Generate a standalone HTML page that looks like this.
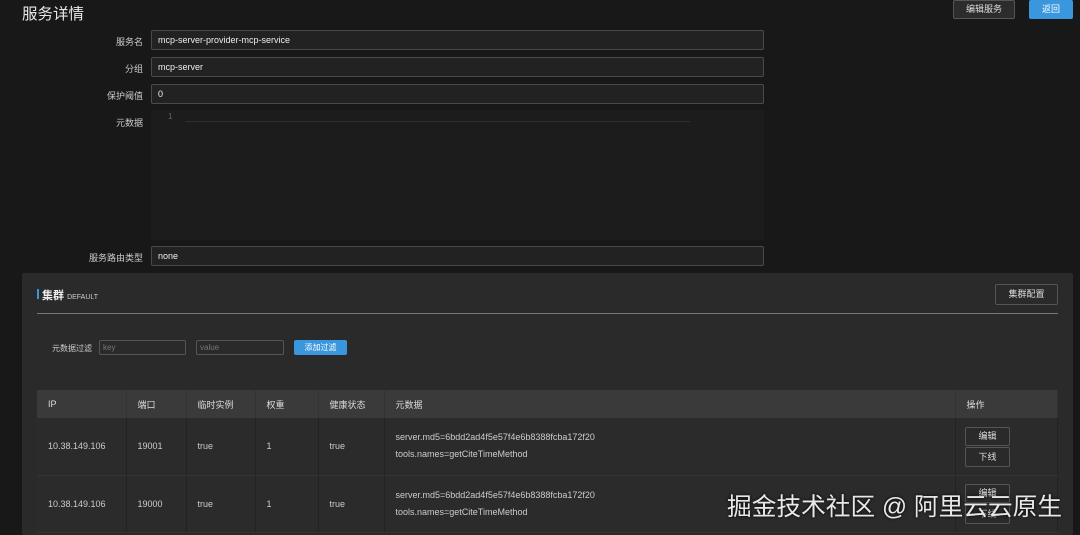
<!DOCTYPE html>
<html><head><meta charset="utf-8"><style>
*{box-sizing:border-box;margin:0;padding:0}
body{width:1080px;height:535px;overflow:hidden;background:#181818;font-family:"Liberation Sans","Noto Sans CJK SC",sans-serif;color:#ddd;position:relative;font-size:9px}
.a{position:absolute}
.lbl{position:absolute;right:937px;font-size:9px;color:#ccc;text-align:right}
.inp{position:absolute;left:151px;width:613px;height:20px;border:1px solid #4a4a4a;background:#222;border-radius:2px;padding-left:6px;line-height:18px;font-size:9px;color:#eee}
.btn{position:absolute;border:1px solid #555;border-radius:2px;text-align:center;font-size:9px;color:#ddd;background:#2a2a2a}
.blue{background:#3a96dd;border-color:#3a96dd;color:#fff}
table{position:absolute;left:37px;top:390px;width:1021px;border-collapse:collapse;font-size:9px;color:#ccc}
th{background:#3a3a3a;height:28px;text-align:left;padding-left:11px;font-weight:normal;color:#ddd;border-right:1px solid #333}
td{height:57px;padding-left:11px;border-right:1px solid #222;border-bottom:1px solid #333;background:#2b2b2b}
</style></head><body>
<div class="a" style="left:22px;top:2px;font-size:15.5px;color:#e8e8e8">服务详情</div>
<div class="btn" style="left:953px;top:0;width:62px;height:19px;line-height:17px;background:#2c2c2c">编辑服务</div>
<div class="btn blue" style="left:1029px;top:0;width:44px;height:19px;line-height:17px">返回</div>
<div class="lbl" style="top:35px">服务名</div><div class="inp" style="top:30px">mcp-server-provider-mcp-service</div>
<div class="lbl" style="top:62px">分组</div><div class="inp" style="top:57px">mcp-server</div>
<div class="lbl" style="top:89px">保护阈值</div><div class="inp" style="top:84px">0</div>
<div class="lbl" style="top:116px">元数据</div>
<div class="a" style="left:151px;top:110px;width:613px;height:130px;background:#1c1c1c"></div>
<div class="a" style="left:168px;top:112px;font-size:8px;color:#666">1</div>
<div class="a" style="left:185px;top:121px;width:505px;height:1px;background:#2e2e2e"></div>
<div class="lbl" style="top:251px">服务路由类型</div><div class="inp" style="top:246px">none</div>
<div class="a" style="left:22px;top:273px;width:1051px;height:262px;background:#2a2a2a;border-radius:2px"></div>
<div class="a" style="left:37px;top:289px;width:2px;height:10px;background:#3a96dd"></div>
<div class="a" style="left:42px;top:287px;font-size:11px;font-weight:bold;color:#eee">集群 <span style="font-size:7px;font-weight:normal;color:#ccc">DEFAULT</span></div>
<div class="btn" style="left:995px;top:284px;width:63px;height:21px;line-height:19px">集群配置</div>
<div class="a" style="left:37px;top:313px;width:1021px;height:1px;background:#777"></div>
<div class="a" style="left:52px;top:343px;font-size:8px;color:#ccc">元数据过滤</div>
<div class="btn" style="left:99px;top:340px;width:87px;height:15px;text-align:left;padding-left:3px;line-height:13px;color:#777;font-size:8px;background:#2a2a2a">key</div>
<div class="btn" style="left:196px;top:340px;width:88px;height:15px;text-align:left;padding-left:3px;line-height:13px;color:#777;font-size:8px;background:#2a2a2a">value</div>
<div class="btn blue" style="left:294px;top:340px;width:53px;height:15px;line-height:13px;font-size:8px">添加过滤</div>
<table>
<tr><th style="width:89px">IP</th><th style="width:60px">端口</th><th style="width:69px">临时实例</th><th style="width:63px">权重</th><th style="width:66px">健康状态</th><th style="width:571px">元数据</th><th>操作</th></tr>
<tr><td>10.38.149.106</td><td>19001</td><td>true</td><td>1</td><td>true</td><td style="line-height:17px">server.md5=6bdd2ad4f5e57f4e6b8388fcba172f20<br>tools.names=getCiteTimeMethod</td><td></td></tr>
<tr><td>10.38.149.106</td><td>19000</td><td>true</td><td>1</td><td>true</td><td style="line-height:17px">server.md5=6bdd2ad4f5e57f4e6b8388fcba172f20<br>tools.names=getCiteTimeMethod</td><td></td></tr>
</table>
<div class="btn" style="left:965px;top:427px;width:45px;height:19px;line-height:17px">编辑</div>
<div class="btn" style="left:965px;top:447px;width:45px;height:20px;line-height:18px">下线</div>
<div class="btn" style="left:965px;top:484px;width:45px;height:19px;line-height:17px">编辑</div>
<div class="btn" style="left:965px;top:504px;width:45px;height:20px;line-height:18px">下线</div>
<div class="a" style="left:727px;top:487px;font-size:24.7px;color:#e8e8e8;text-shadow:0 0 3px #000;white-space:nowrap">掘金技术社区 @ 阿里云云原生</div>
</body></html>
